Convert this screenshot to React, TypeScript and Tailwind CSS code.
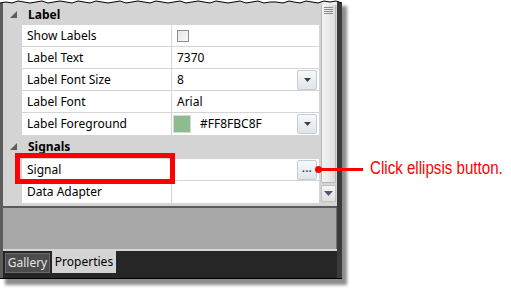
import React from 'react';

const font = { fontFamily: '"Noto Sans", "Open Sans", sans-serif' };

const Expander = () => (
    <svg width="8" height="8" viewBox="0 0 8 8" className="shrink-0">
        <polygon points="7,0 7,7 0,7" fill="#5e5e5e" />
    </svg>
);

const DropButton = ({ dots }: { dots?: boolean }) => (
    <div className="w-[20px] h-[20px] mr-[2px] rounded-[2px] border border-[#c4ccd6] bg-gradient-to-b from-[#f7f9fb] to-[#dfe5ec] flex items-center justify-center">
        {dots ? (
            <span className="text-[10px] leading-none font-bold text-[#333] tracking-[0.5px] -mt-[3px]">...</span>
        ) : (
            <svg width="7" height="4" viewBox="0 0 7 4"><polygon points="0,0 7,0 3.5,4" fill="#404040" /></svg>
        )}
    </div>
);

const Row = ({ name, children, last }: { name: string; children?: React.ReactNode; last?: boolean }) => (
    <div className={`flex h-[22px] ${last ? '' : 'border-b border-[#d4d4d4]'}`}>
        <div className="w-[149px] bg-white pl-[5px] flex items-center text-[12px] text-black">{name}</div>
        <div className="w-px bg-[#d4d4d4]" />
        <div className="flex-1 bg-white flex items-center justify-between text-[12px] text-black">{children}</div>
    </div>
);

const Header = ({ title, h }: { title: string; h: string }) => (
    <div className={`flex items-center ${h}`}>
        <div className="w-[19px] flex justify-center pl-[2px]"><Expander /></div>
        <span className="pl-[6px] text-[12px] font-bold text-black">{title}</span>
    </div>
);

const TornEdge = () => (
    <svg width="342" height="5" viewBox="0 0 342 5" className="block">
        <rect x="0" y="0" width="3" height="5" fill="#5c5c5c" />
        <rect x="3" y="0" width="319" height="5" fill="#d4d4d4" />
        <rect x="322" y="0" width="15" height="5" fill="#eceeef" />
        <rect x="337" y="0" width="5" height="5" fill="#3a3a3a" />
        <path
            d="M0,0 L342,0 L342,3 L336,1 L330,2 L324,1 L318,3 L312,2 L306,1 L300,3 L294,2 L289,1 L283,3 L276,2 L270,2 L264,3 L258,1 L252,2 L246,3 L240,1 L234,2 L228,3 L222,2 L216,1 L210,3 L204,2 L198,1 L192,2 L186,3 L180,1 L174,2 L168,3 L162,2 L156,1 L150,3 L144,2 L138,1 L132,2 L126,3 L120,1 L114,2 L108,3 L102,2 L96,1 L90,3 L84,2 L78,1 L72,3 L66,2 L60,1 L54,2 L48,3 L42,1 L36,2 L30,3 L24,2 L18,1 L12,3 L6,2 L0,3 Z"
            fill="#ffffff"
        />
        <path
            d="M342,3 L336,1 L330,2 L324,1 L318,3 L312,2 L306,1 L300,3 L294,2 L289,1 L283,3 L276,2 L270,2 L264,3 L258,1 L252,2 L246,3 L240,1 L234,2 L228,3 L222,2 L216,1 L210,3 L204,2 L198,1 L192,2 L186,3 L180,1 L174,2 L168,3 L162,2 L156,1 L150,3 L144,2 L138,1 L132,2 L126,3 L120,1 L114,2 L108,3 L102,2 L96,1 L90,3 L84,2 L78,1 L72,3 L66,2 L60,1 L54,2 L48,3 L42,1 L36,2 L30,3 L24,2 L18,1 L12,3 L6,2 L0,3"
            fill="none"
            stroke="#000"
            strokeWidth="1"
        />
    </svg>
);

const App: React.FC = () => {
    return (
        <div className="relative w-[511px] h-[293px] bg-white overflow-hidden" style={font}>
            <div className="flex flex-col w-[342px] shadow-[5px_6px_3px_rgba(0,0,0,0.45)]">
                <TornEdge />
                <div className="flex flex-col border-l-[3px] border-l-[#5c5c5c] border-r-[5px] border-r-[#3a3a3a]">
                    {/* property grid */}
                    <div className="flex bg-[#d4d4d4]">
                        <div className="w-[317px] flex flex-col">
                            <Header title="Label" h="h-[20px]" />
                            <div className="pl-[19px] flex flex-col">
                                <Row name="Show Labels">
                                    <div className="ml-[5px] w-[12px] h-[12px] border border-[#8e8f8f] bg-gradient-to-br from-[#e6e6e6] to-[#f8f8f8]" />
                                </Row>
                                <Row name="Label Text"><span className="pl-[5px]">7370</span></Row>
                                <Row name="Label Font Size">
                                    <span className="pl-[5px]">8</span>
                                    <DropButton />
                                </Row>
                                <Row name="Label Font"><span className="pl-[5px]">Arial</span></Row>
                                <Row name="Label Foreground" last>
                                    <div className="flex items-center">
                                        <div className="ml-[1px] w-[18px] h-[18px] bg-[#8fbc8f] border border-[#d8d8d8]" />
                                        <span className="pl-[9px]">#FF8FBC8F</span>
                                    </div>
                                    <DropButton />
                                </Row>
                            </div>
                            <Header title="Signals" h="h-[24px]" />
                            <div className="pl-[19px] flex flex-col">
                                <Row name="Signal">
                                    <span />
                                    <DropButton dots />
                                </Row>
                                <Row name="Data Adapter" last />
                            </div>
                            <div className="h-[3px]" />
                        </div>
                        <div className="w-[2px]" />
                        {/* scrollbar */}
                        <div className="w-[15px] flex flex-col">
                            <div className="flex-1 bg-gradient-to-r from-[#f4f4f4] to-[#dedede] border border-[#b8b8b8] border-t-0 rounded-b-[2px] flex flex-col items-center pt-[2px] gap-[1px]">
                                <div className="w-[9px] h-px bg-[#8a8a8a]" />
                                <div className="w-[9px] h-px bg-[#8a8a8a]" />
                                <div className="w-[9px] h-px bg-[#8a8a8a]" />
                                <div className="w-[9px] h-px bg-[#8a8a8a]" />
                            </div>
                            <div className="h-[17px] mt-[2px] mb-[4px] border border-[#c0c0c0] bg-gradient-to-b from-[#f4f4f4] to-[#e0e0e0] flex items-center justify-center">
                                <svg width="9" height="5" viewBox="0 0 9 5"><polygon points="0,0 9,0 4.5,5" fill="#4c5a74" /></svg>
                            </div>
                        </div>
                        <div className="w-px" />
                    </div>
                    {/* lower panel */}
                    <div className="h-[2px] bg-[#5a5a5a]" />
                    <div className="h-[41px] bg-[#a8a8a8] border-r border-[#707070]" />
                    <div className="h-[2px] bg-[#d6d6d6]" />
                    <div className="h-[27px] bg-[#262626] flex items-start gap-[2px] pl-[2px]">
                        <div className="mt-[2px] h-[20px] w-[45px] bg-[#4c4c4c] border border-[#6a6a6a] flex items-center justify-center text-[12px] text-[#e4e4e4]">
                            Gallery
                        </div>
                        <div className="h-[22px] w-[64px] bg-[#d4d4d4] flex items-center justify-center text-[12px] text-black">
                            Properties
                        </div>
                    </div>
                </div>
                <div className="h-px bg-black" />
            </div>

            {/* red highlight box */}
            <div className="absolute left-[15px] top-[153px] w-[160px] h-[31px] border-[5px] border-[#ff0000]" />

            {/* callout */}
            <div className="absolute left-[315px] top-[166px] w-[7px] h-[7px] rounded-full bg-[#ff0000]" />
            <div className="absolute left-[318px] top-[168px] w-[45px] h-[3px] bg-[#ff0000]" />
            <div
                className="absolute left-[370px] top-[157px] text-[18px] leading-[22px] text-[#ff0000] origin-left scale-x-[0.84] whitespace-nowrap"
                style={{ fontFamily: '"Liberation Sans", Arial, sans-serif' }}
            >
                Click ellipsis button.
            </div>
        </div>
    );
};

export default App;
